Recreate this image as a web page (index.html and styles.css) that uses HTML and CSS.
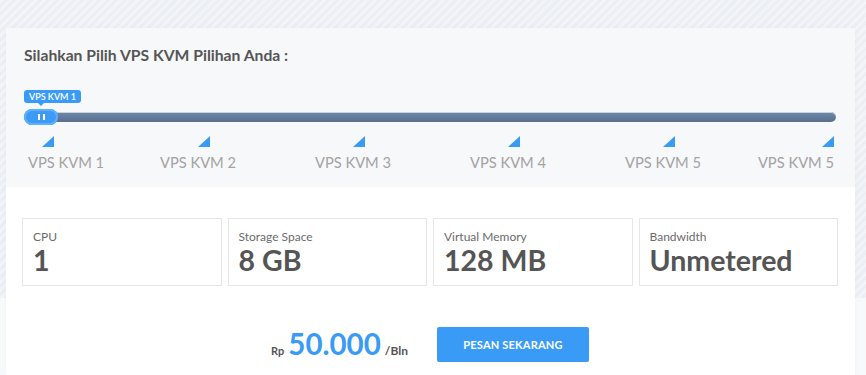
FILE: index.html
```html
<!DOCTYPE html>
<html>
<head>
<meta charset="utf-8">
<link rel="stylesheet" href="styles.css">
</head>
<body>
<div class="page">
  <div class="panel">
    <section class="picker">
      <h2 class="title">Silahkan Pilih VPS KVM Pilihan Anda :</h2>
      <div class="slider">
        <div class="tip">VPS KVM 1</div>
        <div class="track">
          <div class="handle"><span></span><span></span></div>
        </div>
        <div class="grid">
          <div class="tick t1"><i></i><span>VPS KVM 1</span></div>
          <div class="tick t2"><i></i><span>VPS KVM 2</span></div>
          <div class="tick t3"><i></i><span>VPS KVM 3</span></div>
          <div class="tick t4"><i></i><span>VPS KVM 4</span></div>
          <div class="tick t5"><i></i><span>VPS KVM 5</span></div>
          <div class="tick t6"><i></i><span>VPS KVM 5</span></div>
        </div>
      </div>
    </section>
    <section class="specs">
      <div class="cards">
        <div class="card"><div class="label">CPU</div><div class="value">1</div></div>
        <div class="card"><div class="label">Storage Space</div><div class="value">8 GB</div></div>
        <div class="card"><div class="label">Virtual Memory</div><div class="value">128 MB</div></div>
        <div class="card"><div class="label">Bandwidth</div><div class="value">Unmetered</div></div>
      </div>
      <div class="order">
        <div class="price"><span class="cur">Rp</span><span class="amount">50.000</span><span class="per">/Bln</span></div>
        <button class="btn">PESAN SEKARANG</button>
      </div>
    </section>
  </div>
</div>
</body>
</html>
```
FILE: styles.css
```css
* { box-sizing: border-box; }
html, body { margin: 0; padding: 0; }
body {
  width: 866px;
  height: 375px;
  overflow: hidden;
  font-family: "Lato", "Noto Sans", sans-serif;
  background:
    repeating-linear-gradient(135deg, #f3f4f8 0 3px, #eceef5 3px 6px) top left / 100% 298px no-repeat,
    #f8f9fb;
}
.page {
  padding: 28px 11px 0 6px;
}
.panel {
  background: #fff;
  box-shadow: 0 0 6px rgba(0,0,0,0.03);
}
.picker {
  background: #f7f8fa;
  height: 159px;
  padding: 17px 19px 0 18px;
}
.title {
  margin: 0;
  font-size: 15.7px;
  line-height: 20px;
  font-weight: 700;
  color: #555;
}
.slider {
  position: relative;
  margin-top: 25px;
  height: 90px;
}
.tip {
  position: absolute;
  left: 0;
  top: 0;
  background: #3a9bf6;
  color: #fff;
  font-size: 9px;
  line-height: 13px;
  padding: 0 5px;
  border-radius: 3px;
  font-weight: 600;
}
.tip::after {
  content: "";
  position: absolute;
  left: 14px;
  bottom: -3px;
  border-left: 3px solid transparent;
  border-right: 3px solid transparent;
  border-top: 3px solid #3a9bf6;
}
.track {
  position: absolute;
  left: 0;
  right: 0;
  top: 22px;
  height: 10px;
  border-radius: 5px;
  background: linear-gradient(#7088a8, #5a6f8e);
  box-shadow: inset 0 1px 0 #c9d1dc;
}
.handle {
  position: absolute;
  left: 0;
  top: -3px;
  width: 34px;
  height: 16px;
  border-radius: 8px;
  background: #3d9bf5;
  box-shadow: inset 0 0 0 2px #5fb0fa;
  display: flex;
  justify-content: center;
  align-items: center;
  gap: 3px;
}
.handle span {
  width: 2px;
  height: 6px;
  background: #fff;
}
.grid {
  position: absolute;
  left: 0;
  right: 0;
  top: 46px;
}
.tick {
  position: absolute;
  top: 0;
  width: 80px;
  display: flex;
  flex-direction: column;
  align-items: center;
}
.tick i {
  display: block;
  width: 0;
  height: 0;
  border-left: 12px solid transparent;
  border-bottom: 11px solid #3a9bf6;
  margin-left: 12px;
}
.tick span {
  margin-top: 6px;
  font-size: 14.7px;
  line-height: 18px;
  color: #a3a3a3;
  white-space: nowrap;
}
.t1 { left: 4px; align-items: flex-start; }
.t1 i { margin-left: 14px; }
.t2 { left: 134px; }
.t3 { left: 289px; }
.t4 { left: 444px; }
.t5 { left: 599px; }
.t6 { right: 2px; align-items: flex-end; }
.t6 i { margin-left: 0; }

.specs {
  padding: 31px 17px 14px 16px;
}
.cards {
  display: grid;
  grid-template-columns: repeat(4, 1fr);
  gap: 6px;
}
.card {
  border: 1px solid #e6e6e6;
  height: 68px;
  padding: 10px 10px 0;
}
.label {
  font-size: 12px;
  line-height: 16px;
  color: #6b6b6b;
}
.value {
  font-size: 28.5px;
  line-height: 30px;
  font-weight: 700;
  color: #555;
  margin-top: 0;
}
.order {
  display: flex;
  justify-content: center;
  align-items: center;
  gap: 29px;
  margin-top: 40px;
}
.price {
  display: flex;
  align-items: baseline;
  gap: 4px;
  color: #555;
}
.cur { font-size: 11px; font-weight: 700; }
.amount { font-size: 29.5px; font-weight: 700; color: #3a9bf6; line-height: 36px; }
.per { font-size: 12px; font-weight: 700; }
.btn {
  width: 152px;
  height: 35px;
  border: 0;
  border-radius: 2px;
  background: #3a9bf7;
  color: #fff;
  font-family: inherit;
  font-size: 11px;
  font-weight: 700;
  letter-spacing: 0.2px;
}
```
